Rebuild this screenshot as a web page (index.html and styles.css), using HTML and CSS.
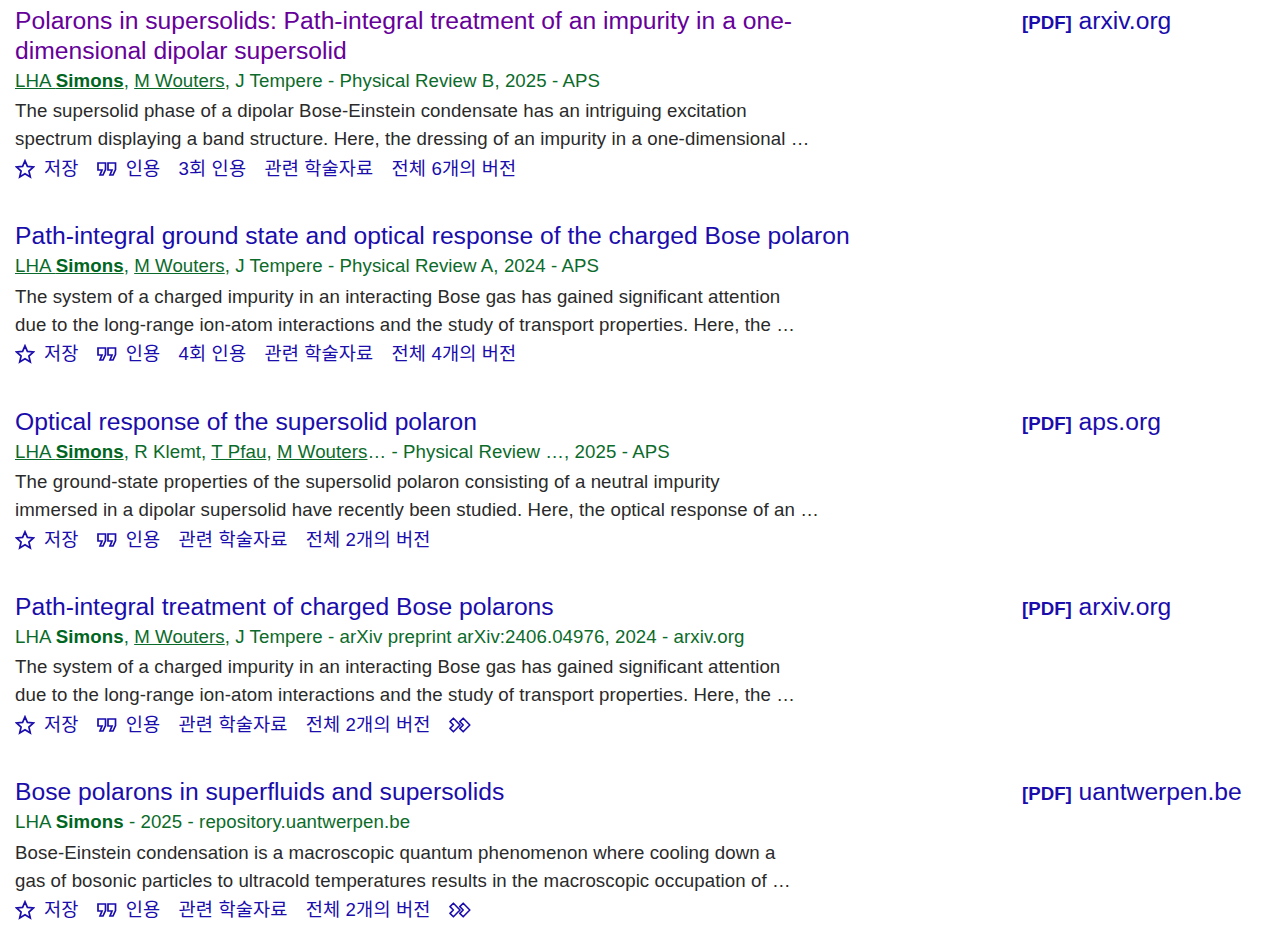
FILE: index.html
```html
<!DOCTYPE html>
<html lang="ko">
<head>
<meta charset="utf-8">
<title>Scholar results</title>
<link rel="stylesheet" href="styles.css">
</head>
<body>
<svg class="defs" width="0" height="0" aria-hidden="true">
  <symbol id="star" viewBox="0 0 20 20"><path d="M10 1.8l2.4 5.6 6.1.6-4.6 4 1.4 6L10 14.8 4.7 18l1.4-6-4.6-4 6.1-.6z" fill="none" stroke="currentColor" stroke-width="1.7" stroke-linejoin="miter"/></symbol>
  <symbol id="quote" viewBox="0 0 20 14"><path d="M1 1h7.5v6.5L6 13H3l2-5H1zM11 1h7.5v6.5L16 13h-3l2-5h-4z" fill="none" stroke="currentColor" stroke-width="1.7"/></symbol>
  <symbol id="more" viewBox="0 0 22 16"><path d="M1 4.6L4.4 1.2l6.6 6.8-6.6 6.8L1 11.4 4.4 8zM10.8 4.6l3.4-3.4 6.6 6.8-6.6 6.8-3.4-3.4L14.2 8z" fill="none" stroke="currentColor" stroke-width="1.6" stroke-linejoin="round"/></symbol>
</svg>
<main class="results">
  <article class="result">
    <div class="main">
      <h3 class="title"><a class="visited" href="#">Polarons in supersolids: Path-integral treatment of an impurity in a one-dimensional dipolar supersolid</a></h3>
      <div class="meta"><a href="#">LHA <b>Simons</b></a>, <a href="#">M Wouters</a>, J Tempere - Physical Review B, 2025 - APS</div>
      <div class="snippet">The supersolid phase of a dipolar Bose-Einstein condensate has an intriguing excitation<br>spectrum displaying a band structure. Here, the dressing of an impurity in a one-dimensional …</div>
      <div class="actions">
        <a href="#" class="icon-link"><svg class="ic-star"><use href="#star"/></svg>저장</a>
        <a href="#" class="icon-link"><svg class="ic-quote"><use href="#quote"/></svg>인용</a>
        <a href="#">3회 인용</a><a href="#">관련 학술자료</a><a href="#">전체 6개의 버전</a>
      </div>
    </div>
    <div class="side"><a href="#"><span class="tag">[PDF]</span> arxiv.org</a></div>
  </article>
  <article class="result">
    <div class="main">
      <h3 class="title"><a href="#">Path-integral ground state and optical response of the charged Bose polaron</a></h3>
      <div class="meta"><a href="#">LHA <b>Simons</b></a>, <a href="#">M Wouters</a>, J Tempere - Physical Review A, 2024 - APS</div>
      <div class="snippet">The system of a charged impurity in an interacting Bose gas has gained significant attention<br>due to the long-range ion-atom interactions and the study of transport properties. Here, the …</div>
      <div class="actions">
        <a href="#" class="icon-link"><svg class="ic-star"><use href="#star"/></svg>저장</a>
        <a href="#" class="icon-link"><svg class="ic-quote"><use href="#quote"/></svg>인용</a>
        <a href="#">4회 인용</a><a href="#">관련 학술자료</a><a href="#">전체 4개의 버전</a>
      </div>
    </div>
    <div class="side"></div>
  </article>
  <article class="result">
    <div class="main">
      <h3 class="title"><a href="#">Optical response of the supersolid polaron</a></h3>
      <div class="meta"><a href="#">LHA <b>Simons</b></a>, R Klemt, <a href="#">T Pfau</a>, <a href="#">M Wouters</a>… - Physical Review …, 2025 - APS</div>
      <div class="snippet">The ground-state properties of the supersolid polaron consisting of a neutral impurity<br>immersed in a dipolar supersolid have recently been studied. Here, the optical response of an …</div>
      <div class="actions">
        <a href="#" class="icon-link"><svg class="ic-star"><use href="#star"/></svg>저장</a>
        <a href="#" class="icon-link"><svg class="ic-quote"><use href="#quote"/></svg>인용</a>
        <a href="#">관련 학술자료</a><a href="#">전체 2개의 버전</a>
      </div>
    </div>
    <div class="side"><a href="#"><span class="tag">[PDF]</span> aps.org</a></div>
  </article>
  <article class="result">
    <div class="main">
      <h3 class="title"><a href="#">Path-integral treatment of charged Bose polarons</a></h3>
      <div class="meta">LHA <b>Simons</b>, <a href="#">M Wouters</a>, J Tempere - arXiv preprint arXiv:2406.04976, 2024 - arxiv.org</div>
      <div class="snippet">The system of a charged impurity in an interacting Bose gas has gained significant attention<br>due to the long-range ion-atom interactions and the study of transport properties. Here, the …</div>
      <div class="actions">
        <a href="#" class="icon-link"><svg class="ic-star"><use href="#star"/></svg>저장</a>
        <a href="#" class="icon-link"><svg class="ic-quote"><use href="#quote"/></svg>인용</a>
        <a href="#">관련 학술자료</a><a href="#">전체 2개의 버전</a>
        <a href="#" class="more"><svg class="ic-more"><use href="#more"/></svg></a>
      </div>
    </div>
    <div class="side"><a href="#"><span class="tag">[PDF]</span> arxiv.org</a></div>
  </article>
  <article class="result">
    <div class="main">
      <h3 class="title"><a href="#">Bose polarons in superfluids and supersolids</a></h3>
      <div class="meta">LHA <b>Simons</b> - 2025 - repository.uantwerpen.be</div>
      <div class="snippet">Bose-Einstein condensation is a macroscopic quantum phenomenon where cooling down a<br>gas of bosonic particles to ultracold temperatures results in the macroscopic occupation of …</div>
      <div class="actions">
        <a href="#" class="icon-link"><svg class="ic-star"><use href="#star"/></svg>저장</a>
        <a href="#" class="icon-link"><svg class="ic-quote"><use href="#quote"/></svg>인용</a>
        <a href="#">관련 학술자료</a><a href="#">전체 2개의 버전</a>
        <a href="#" class="more"><svg class="ic-more"><use href="#more"/></svg></a>
      </div>
    </div>
    <div class="side"><a href="#"><span class="tag">[PDF]</span> uantwerpen.be</a></div>
  </article>
</main>
</body>
</html>
```
FILE: styles.css
```css
* { box-sizing: border-box; }
html, body { margin: 0; padding: 0; background: #fff; }
body {
  font-family: "Liberation Sans", Arial, "Noto Sans CJK KR", sans-serif;
  overflow: hidden;
  height: 941px;
}
.defs { position: absolute; }
a { color: #1a0dab; text-decoration: none; }
.results { padding: 6.1px 0 0 15px; display: flex; flex-direction: column; gap: 38.33px; }
.result { display: flex; }
.main { width: 1007px; flex: none; }
.title { margin: 0; font-size: 24.67px; font-weight: 400; line-height: 30px; max-width: 840px; }
.title a.visited { color: #660099; }
.meta { font-size: 18.67px; letter-spacing: 0.08px; line-height: 30px; color: #0b6b2a; }
.meta a { color: #0b6b2a; text-decoration: underline; }
.meta b { color: #006621; }
.snippet { font-size: 18.67px; letter-spacing: 0.09px; line-height: 28px; color: #2a2a2a; margin-top: 1.3px; }
.actions { display: flex; align-items: center; font-size: 18.67px; letter-spacing: 0.12px; line-height: 28px; gap: 18.2px; margin-top: 1.7px; }
.icon-link { display: flex; align-items: center; gap: 9px; }
.ic-star { width: 20px; height: 20px; }
.ic-quote { width: 20px; height: 14px; }
.ic-more { width: 22px; height: 16px; display: block; }
.side { font-size: 24.67px; line-height: 30px; white-space: nowrap; }
.tag { font-size: 18.67px; font-weight: 700; }
```
